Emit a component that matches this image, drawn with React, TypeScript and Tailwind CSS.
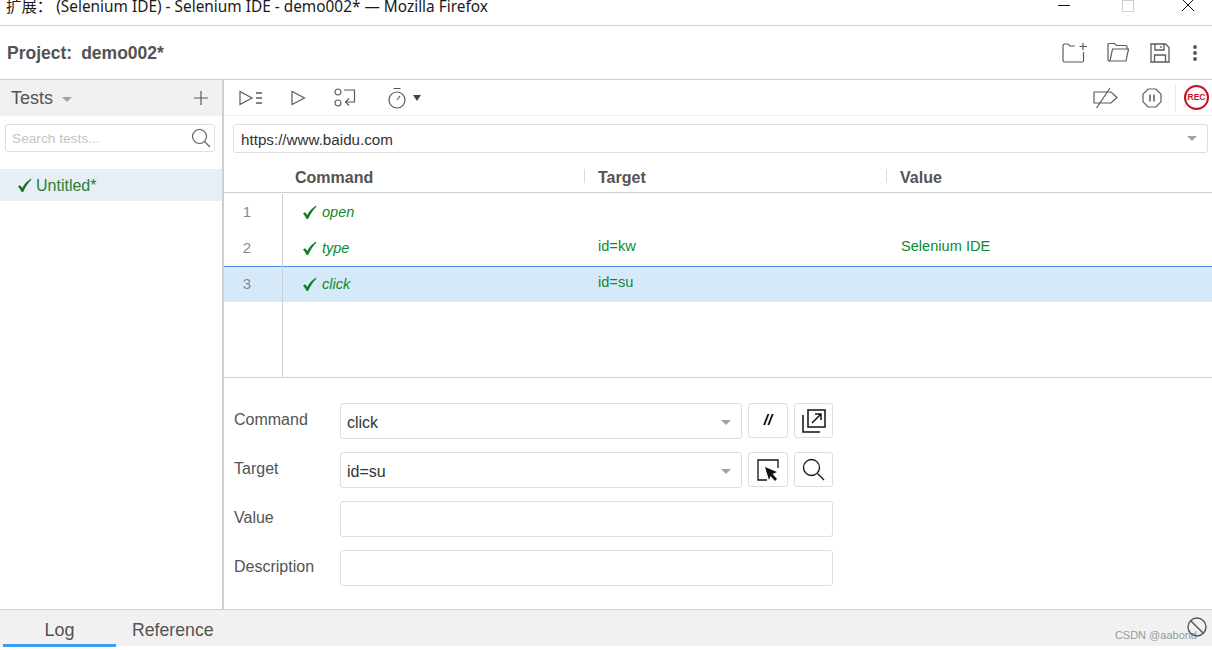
import React from 'react';

function Caret({className = ''}: {className?: string}) {
    return <span className={`block w-0 h-0 border-x-[5px] border-x-transparent border-t-[5px] border-t-[#a3a3a3] ${className}`}/>;
}

function Check({className = ''}: {className?: string}) {
    return (
        <svg width="15" height="15" viewBox="0 0 15 15" className={className}>
            <path d="M1 8.500 L3 7.200 L5.300 10 C7.300 6.300 10 3.200 13.800 0.800 L14.500 1.600 C11.300 4.800 8.300 8.800 6.300 13.800 L4.600 14 C3.600 11.800 2.500 10 1 8.500 Z" fill="currentColor"/>
        </svg>
    );
}

function IconBox({children, narrow}: {children: React.ReactNode; narrow?: boolean}) {
    return (
        <button className={`${narrow ? 'w-[39px]' : 'w-[40px]'} h-[35px] flex items-center justify-center bg-white border border-[#dedede] rounded-[3px]`}>
            {children}
        </button>
    );
}

function FieldRow({label, value, caret, children}: {label: string; value?: string; caret?: boolean; children?: React.ReactNode}) {
    return (
        <div className="flex items-start h-[36px] mb-[13px]">
            <label className="w-[116px] pl-[10px] pt-[7px] text-[16px] leading-[20px] text-[#535353]">{label}</label>
            {caret ? (
                <div className="flex gap-[6px]">
                    <div className="w-[402px] h-[36px] flex items-center justify-between pl-[6px] pr-[10px] border border-[#dedede] rounded-[3px] text-[16px] text-[#333]">
                        <span className="pt-[3px]">{value}</span>
                        <Caret className="mt-[2px]"/>
                    </div>
                    {children}
                </div>
            ) : (
                <div className="w-[493px] h-[36px] border border-[#dedede] rounded-[3px]"/>
            )}
        </div>
    );
}

const rows = [
    {n: 1, cmd: 'open', target: '', value: ''},
    {n: 2, cmd: 'type', target: 'id=kw', value: 'Selenium IDE'},
    {n: 3, cmd: 'click', target: 'id=su', value: ''},
];

export default function App() {
    return (
        <div className="w-[1212px] h-[650px] overflow-hidden flex flex-col bg-white text-[#535353] font-['Liberation_Sans','Noto_Sans_CJK_SC',sans-serif]">
            {/* window title */}
            <div className="h-[26px] shrink-0 flex items-start justify-between border-b border-[#cfcfcf]">
                <div className="pl-[6px] -mt-[3px] text-[15.400px] leading-[20px] text-[#1a1a1a] font-['Noto_Sans','Noto_Sans_CJK_SC',sans-serif] whitespace-pre">扩展： (Selenium IDE) - Selenium IDE - demo002* — Mozilla Firefox</div>
                <div className="flex items-start text-black">
                    <svg width="12" height="12" viewBox="0 0 12 12" className="mr-[52px]"><path d="M0 5.500H12" stroke="#111" strokeWidth="1"/></svg>
                    <span className="w-[12px] h-[12px] border border-[#cfcfcf] mr-[47px]"/>
                    <svg width="14" height="12" viewBox="0 0 14 12" className="mr-[17px]"><path d="M1 -1L13 11M13 -1L1 11" stroke="#111" strokeWidth="1"/></svg>
                </div>
            </div>

            {/* project bar */}
            <div className="h-[54px] shrink-0 flex items-center justify-between border-b border-[#cfcfcf] pl-[7px]">
                <div className="flex gap-[9px] text-[17.500px] font-bold text-[#535353] mt-[1px]">
                    <span>Project:</span>
                    <span>demo002*</span>
                </div>
                <div className="flex items-center mr-[15px]">
                    <svg width="26" height="22" viewBox="0 0 26 22" fill="none" stroke="#5a5a5a" strokeWidth="1.200" className="mr-[19px]">
                        <path d="M13 4H8L6 2H2.500A1.500 1.500 0 0 0 1 3.500V18.500A1.500 1.500 0 0 0 2.500 20H20A1.500 1.500 0 0 0 21.500 18.500V10"/>
                        <path d="M21 1V8M17.500 4.500H25"/>
                    </svg>
                    <svg width="23" height="21" viewBox="0 0 23 21" fill="none" stroke="#5a5a5a" strokeWidth="1.200" className="mr-[20px]">
                        <path d="M3 19H2A1 1 0 0 1 1 18V2.500A1 1 0 0 1 2 1.500H7.500L9.500 3.500H19A1 1 0 0 1 20 4.500V7"/>
                        <path d="M5.500 7H21.500L19 19H3Z"/>
                    </svg>
                    <svg width="20" height="20" viewBox="0 0 20 20" fill="none" stroke="#5a5a5a" strokeWidth="1.300" className="mr-[23px]">
                        <path d="M1 1H15.500L19 4.500V19H1Z"/>
                        <path d="M5 1V7H14V1M11 3V5M4.500 19V12H15.500V19"/>
                    </svg>
                    <svg width="4" height="16" viewBox="0 0 4 16" fill="#535353"><circle cx="2" cy="2" r="1.900"/><circle cx="2" cy="8" r="1.900"/><circle cx="2" cy="14" r="1.900"/></svg>
                </div>
            </div>

            <div className="flex-1 flex min-h-0">
                {/* tests panel */}
                <aside className="w-[224px] shrink-0 border-r-2 border-[#cfcfcf] flex flex-col">
                    <div className="h-[36px] shrink-0 bg-[#f1f1f1] flex items-center justify-between pl-[11px] pr-[14px]">
                        <div className="flex items-center gap-[9px]">
                            <span className="text-[18px] text-[#535353]">Tests</span>
                            <Caret className="mt-[2px]"/>
                        </div>
                        <svg width="14" height="14" viewBox="0 0 14 14" stroke="#5a5a5a" strokeWidth="1.200"><path d="M7 0V14M0 7H14"/></svg>
                    </div>
                    <div className="mt-[8px] ml-[5px] mr-[7px] h-[28px] flex items-center justify-between border border-[#dedede] rounded-[3px] pl-[6px] pr-[3px]">
                        <span className="text-[13.700px] text-[#c4c4c4] pt-[3px]">Search tests...</span>
                        <svg width="20" height="20" viewBox="0 0 20 20" fill="none" stroke="#5a5a5a" strokeWidth="1.100"><circle cx="8.500" cy="8.500" r="7"/><path d="M13.500 13.500L19 19"/></svg>
                    </div>
                    <div className="mt-[17px] h-[32px] bg-[#e6eff6] flex items-center pl-[17px] gap-[4px] text-[#2e7d32]">
                        <Check className="text-[#1d6b2a]"/>
                        <span className="text-[16px] pt-[1px]">Untitled*</span>
                    </div>
                </aside>

                {/* main */}
                <main className="flex-1 min-w-0 flex flex-col">
                    <div className="h-[36px] shrink-0 flex items-center border-b border-[#f1f1f1] pl-[15px] pr-[3px]">
                        <svg width="24" height="16" viewBox="0 0 24 16" fill="none" stroke="#5a5a5a" strokeWidth="1.200"><path d="M1 1.500V14.500L13 8Z"/><path d="M17 3H23M17 8H23M17 13H23" strokeWidth="1.400"/></svg>
                        <svg width="15" height="16" viewBox="0 0 15 16" fill="none" stroke="#5a5a5a" strokeWidth="1.200" className="ml-[28px]"><path d="M1 1.500V14.500L13.500 8Z"/></svg>
                        <svg width="22" height="19" viewBox="0 0 22 19" fill="none" stroke="#5a5a5a" strokeWidth="1.200" className="ml-[28px]"><circle cx="4" cy="4" r="3"/><circle cx="4" cy="15" r="3"/><path d="M10 2H20.500V14H12M15 10.500L11.500 14L15 17.500"/></svg>
                        <svg width="20" height="22" viewBox="0 0 20 22" fill="none" stroke="#5a5a5a" strokeWidth="1.200" className="ml-[31px]"><circle cx="10" cy="13" r="8"/><path d="M6.500 1.500H13.500M10 13L13 9"/></svg>
                        <span className="ml-[6px] w-0 h-0 border-x-[4px] border-x-transparent border-t-[6px] border-t-[#444]"/>
                        <svg width="25" height="21" viewBox="0 0 25 21" fill="none" stroke="#5a5a5a" strokeWidth="1.200" className="ml-auto"><path d="M1 5H18L24 10.500L18 16H1Z"/><path d="M17 1L3.500 21"/></svg>
                        <svg width="20" height="20" viewBox="0 0 20 20" fill="none" stroke="#5a5a5a" strokeWidth="1.200" className="ml-[24px]"><path d="M6.200 1H13.800L19 6.200V13.800L13.800 19H6.200L1 13.800V6.200Z"/><path d="M8 6.500V13.500M12 6.500V13.500" strokeWidth="1.500"/></svg>
                        <div className="ml-[13px] h-[28px] border-l border-[#eaeaea] pl-[8px] flex items-center">
                            <span className="w-[25px] h-[25px] rounded-full border-2 border-[#c0121f] flex items-center justify-center text-[8.500px] font-bold text-[#c0121f]">REC</span>
                        </div>
                    </div>

                    <div className="mt-[8px] ml-[9px] mr-[4px] h-[29px] shrink-0 flex items-center justify-between border border-[#dedede] rounded-[3px] pl-[7px] pr-[10px]">
                        <span className="text-[15.200px] text-[#333] pt-[3px]">https://www.baidu.com</span>
                        <Caret/>
                    </div>

                    {/* command table */}
                    <div className="h-[40px] shrink-0 flex items-end pb-[9px] border-b border-[#cfcfcf] text-[16px] font-bold text-[#535353]">
                        <div className="w-[360px] h-[14px] flex items-center pl-[71px] pt-[4px]">Command</div>
                        <div className="w-[302px] h-[14px] flex items-center border-l border-[#d8d8d8] pl-[13px] pt-[4px]">Target</div>
                        <div className="flex-1 h-[14px] flex items-center border-l border-[#d8d8d8] pl-[13px] pt-[4px]">Value</div>
                    </div>
                    <div className="h-[185px] shrink-0 flex flex-col pt-[1px] border-b border-[#cfcfcf]">
                        {rows.map(r => (
                            <div key={r.n} className={`h-[36px] shrink-0 flex items-center text-[#0b8a2f] ${r.n === 3 ? 'bg-[#d6e9f8] shadow-[inset_0_1px_0_#4a90e8]' : ''}`}>
                                <div className="w-[59px] h-full flex items-center justify-center border-r border-[#cfcfcf] text-[#8a8a8a] text-[15px] pr-[12px]">{r.n}</div>
                                <div className="w-[315px] flex items-center pl-[19px] gap-[5px]">
                                    <Check className="text-[#0c7a2a]"/>
                                    <span className="italic text-[14.500px] pt-[2px]">{r.cmd}</span>
                                </div>
                                <div className={`w-[303px] text-[14.600px] ${r.n === 3 ? '-mt-[2px]' : '-mt-[3px]'}`}>{r.target}</div>
                                <div className="flex-1 text-[14.600px] -mt-[3px]">{r.value}</div>
                            </div>
                        ))}
                        <div className="flex-1 w-[59px] border-r border-[#cfcfcf]"/>
                    </div>

                    {/* command editor */}
                    <div className="flex-1 pt-[25px]">
                        <FieldRow label="Command" value="click" caret>
                            <IconBox><span className="italic font-bold text-[15px] text-black">//</span></IconBox>
                            <IconBox narrow>
                                <svg width="24" height="24" viewBox="0 0 24 24" fill="none" stroke="#111" strokeWidth="1.500"><path d="M6 1H23V18H6Z"/><path d="M1 6V23H18"/><path d="M10 14L19 5M13 5H19V11"/></svg>
                            </IconBox>
                        </FieldRow>
                        <FieldRow label="Target" value="id=su" caret>
                            <IconBox>
                                <svg width="22" height="22" viewBox="0 0 22 22" fill="none"><path d="M10 21H1V1H21V9" stroke="#111" strokeWidth="1.300"/><path d="M8 8L20 13L15.500 15L20 20L18 22L13.500 17L12 21Z" fill="#111"/></svg>
                            </IconBox>
                            <IconBox narrow>
                                <svg width="23" height="23" viewBox="0 0 23 23" fill="none" stroke="#111" strokeWidth="1.300"><circle cx="9.500" cy="9.500" r="8"/><path d="M15.500 15.500L22 22"/></svg>
                            </IconBox>
                        </FieldRow>
                        <FieldRow label="Value"/>
                        <FieldRow label="Description"/>
                    </div>
                </main>
            </div>

            {/* console */}
            <div className="h-[37px] shrink-0 bg-[#f1f1f1] border-t border-[#cfcfcf] flex relative">
                <div className="ml-[3px] w-[113px] text-center text-[18px] leading-[40px] border-b-[3px] border-[#3d9bf0] h-[37px] text-[#535353]">Log</div>
                <div className="ml-[16px] text-[17.700px] leading-[40px] text-[#535353]">Reference</div>
                <span className="absolute right-[15px] top-[18px] text-[11px] leading-[14px] text-[#9a9a9a]">CSDN @aabond</span>
                <svg width="20" height="20" viewBox="0 0 20 20" fill="none" stroke="#555" strokeWidth="1.400" className="absolute right-[5px] top-[7px]"><circle cx="10" cy="10" r="9"/><path d="M3.500 3.500L16.500 16.500"/></svg>
            </div>
            <div className="h-[4px] shrink-0 bg-white"/>
        </div>
    );
}
